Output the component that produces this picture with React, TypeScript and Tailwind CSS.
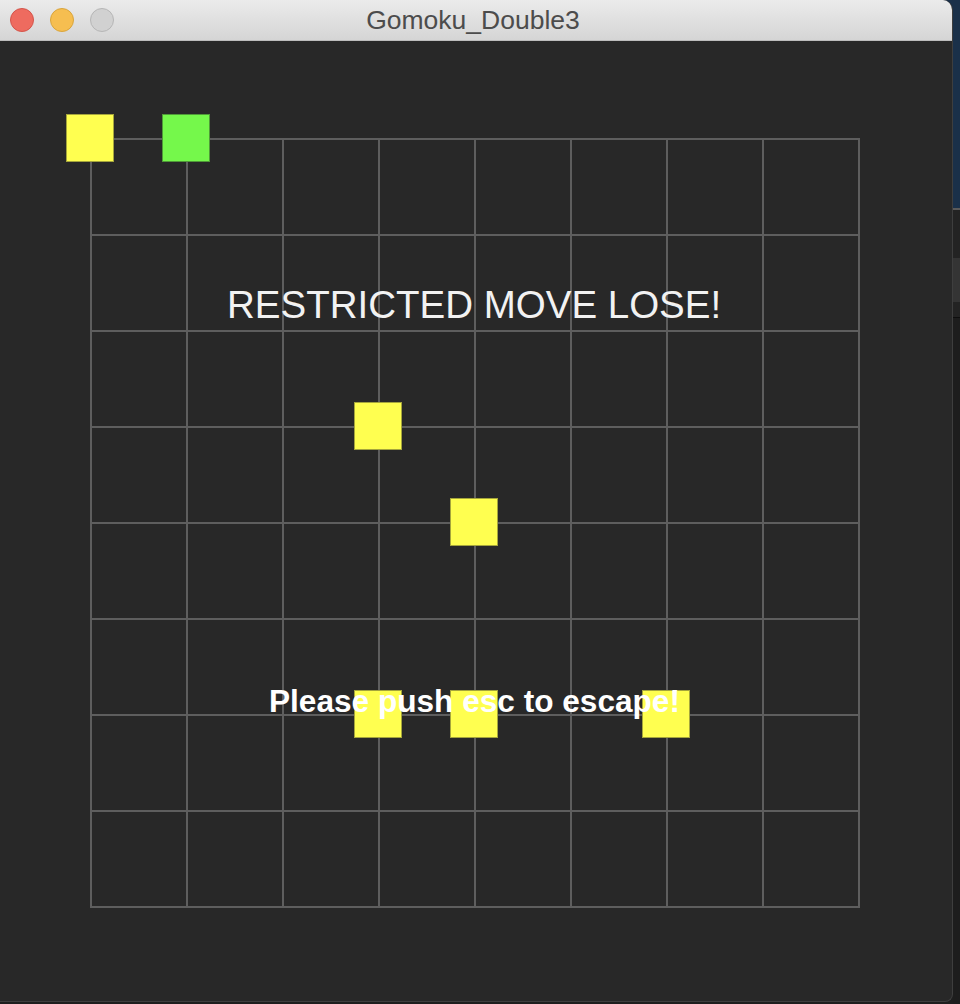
const LINES = [0, 1, 2, 3, 4, 5, 6, 7, 8].map((i) => 91 + i * 96)

const STONES = [
  { x: 91, y: 139, c: 'y' },
  { x: 187, y: 139, c: 'g' },
  { x: 379, y: 427, c: 'y' },
  { x: 475, y: 523, c: 'y' },
  { x: 379, y: 715, c: 'y' },
  { x: 475, y: 715, c: 'y' },
  { x: 667, y: 715, c: 'y' },
]

function Board() {
  return (
    <svg className="block" width={952} height={959} viewBox="0 41 952 959">
      {/* 盤面の線 */}
      {LINES.map((p) => (
        <g key={p}>
          <line x1={p} y1={138} x2={p} y2={908} stroke="#5e5e5e" strokeWidth={2} />
          <line x1={90} y1={p + 48} x2={860} y2={p + 48} stroke="#5e5e5e" strokeWidth={2} />
        </g>
      ))}
      {/* 石 */}
      {STONES.map((s, i) => (
        <rect
          key={i}
          x={s.x - 24.5}
          y={s.y - 24.5}
          width={47}
          height={47}
          fill={s.c === 'y' ? '#ffff50' : '#75f84b'}
          stroke={s.c === 'y' ? '#a5a53c' : '#4f9a38'}
          strokeWidth={1}
        />
      ))}
    </svg>
  )
}

export default function App() {
  return (
    <div className="w-[960px] h-[1004px] flex overflow-hidden bg-[linear-gradient(#1a3049_0,#1a3049_208px,#1e1e1e_208px)] font-['Liberation_Sans',Arial,sans-serif]">
      {/* ウィンドウ */}
      <div className="w-[953px] h-[1002px] flex flex-col shrink-0 rounded-tr-[10px] rounded-br-[8px] overflow-hidden border-r border-b border-[#3e3e3e] bg-[#282828]">
        <div className="h-[41px] shrink-0 relative flex items-center border-b border-[#bcbcbc] bg-gradient-to-b from-[#ebebeb] to-[#d5d5d5]">
          <div className="flex items-center gap-[16px] pl-[10px]">
            <span className="w-[24px] h-[24px] rounded-full bg-[#ee6b5f] border border-[#d4554b]" />
            <span className="w-[24px] h-[24px] rounded-full bg-[#f6be50] border border-[#d9a53c]" />
            <span className="w-[24px] h-[24px] rounded-full bg-[#d1d1d1] border border-[#b6b6b6]" />
          </div>
          <div className="absolute inset-0 flex items-center justify-center pr-[6px] pt-[1px] text-[26.5px] leading-none text-[#4c4c4c]">
            Gomoku_Double3
          </div>
        </div>

        <div className="relative flex-1">
          <Board />
          <div className="absolute left-[227px] top-[245px] text-[38.5px] leading-none text-[#f2f2f2] whitespace-nowrap">
            RESTRICTED MOVE LOSE!
          </div>
          <div className="absolute left-[269px] top-[645px] text-[31.6px] leading-none font-bold text-white whitespace-nowrap">
            Please push esc to escape!
          </div>
        </div>
      </div>

      {/* 背後のウィンドウ */}
      <div className="flex-1 flex flex-col">
        <div className="h-[208px] bg-[#1a3049]" />
        <div className="h-[2px] bg-[#5a5a5a]" />
        <div className="h-[48px] bg-[#232323]" />
        <div className="h-[44px] bg-[#343434]" />
        <div className="h-[15px] bg-[#232323]" />
        <div className="h-[1px] bg-[#0e0e0e]" />
        <div className="flex-1 bg-[#1d1d1d]" />
      </div>
    </div>
  )
}
